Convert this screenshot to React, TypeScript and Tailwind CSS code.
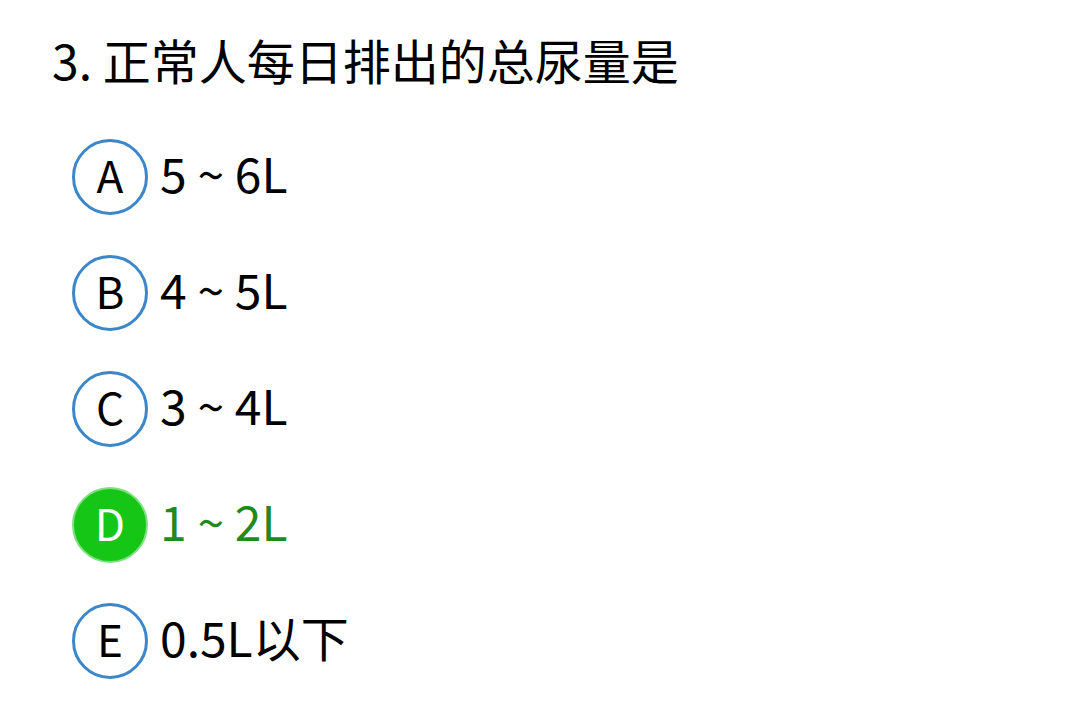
import React from 'react'

const options = [
  { key: 'A', text: '5 ~ 6L' },
  { key: 'B', text: '4 ~ 5L' },
  { key: 'C', text: '3 ~ 4L' },
  { key: 'D', text: '1 ~ 2L', correct: true },
  { key: 'E', text: '0.5L以下' },
]

export default function App() {
  return (
    <div
      className="w-[1080px] h-[714px] bg-white overflow-hidden text-black"
      style={{ fontFamily: "'Noto Sans CJK SC', sans-serif" }}
    >
      <div className="pl-[52px] pt-[29px] h-[100px] text-[48px] leading-[60px]">
        3. 正常人每日排出的总尿量是
      </div>
      <div className="flex flex-col pl-[72px] pt-[39px] gap-[40px]">
        {options.map((o) => (
          <div key={o.key} className="flex items-center h-[76px] gap-[12px]">
            <div
              className={
                o.correct
                  ? 'w-[76px] h-[76px] rounded-full bg-[#16c616] border-[2px] border-[#7fe07f] flex items-center justify-center pb-[6px] text-white text-[44px] leading-none'
                  : 'w-[76px] h-[76px] rounded-full border-[3px] border-[#3b87c9] flex items-center justify-center pb-[6px] text-[44px] leading-none text-black'
              }
            >
              {o.key}
            </div>
            <div className={o.correct ? 'text-[48px] leading-none pb-[10px] text-[#1f8a1f]' : 'text-[48px] leading-none pb-[10px]'}>
              {o.text}
            </div>
          </div>
        ))}
      </div>
    </div>
  )
}
